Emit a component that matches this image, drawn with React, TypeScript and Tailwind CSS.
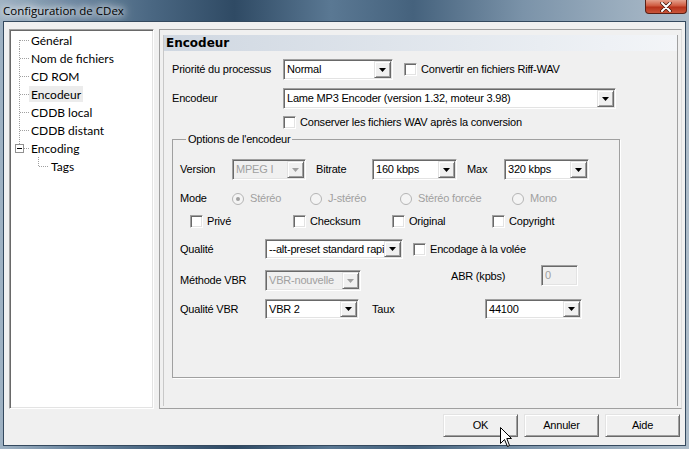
import React from 'react';

const sunken =
  'border border-t-[#a0a0a0] border-l-[#a0a0a0] border-b-white border-r-white shadow-[inset_1px_1px_0_#696969,inset_-1px_-1px_0_#e3e3e3]';
const raised =
  'border border-t-[#e3e3e3] border-l-[#e3e3e3] border-b-[#696969] border-r-[#696969] shadow-[inset_1px_1px_0_#ffffff,inset_-1px_-1px_0_#a0a0a0]';

const Arrow = ({ disabled }: { disabled?: boolean }) => (
  <div className={`flex w-[17px] shrink-0 items-center justify-center bg-[#f0f0f0] ${raised}`}>
    <svg width="7" height="4" viewBox="0 0 7 4">
      <polygon points="0,0 7,0 3.5,4" fill={disabled ? '#a0a0a0' : '#000'} />
    </svg>
  </div>
);

const Combo = ({ value, className, disabled }: { value: string; className: string; disabled?: boolean }) => (
  <div className={`flex shrink-0 p-px ${sunken} ${disabled ? 'bg-[#f0f0f0] text-[#a0a0a0]' : 'bg-white'} ${className}`}>
    <div className="flex min-w-0 flex-1 items-center overflow-hidden whitespace-nowrap pl-[2px]">{value}</div>
    <Arrow disabled={disabled} />
  </div>
);

const Check = ({ label, className = '' }: { label: string; className?: string }) => (
  <div className={`flex h-[13px] shrink-0 items-center ${className}`}>
    <div className={`h-[13px] w-[13px] shrink-0 bg-white ${sunken}`} />
    <span className="ml-[4px] whitespace-nowrap">{label}</span>
  </div>
);

const Radio = ({ label, checked, className = '' }: { label: string; checked?: boolean; className?: string }) => (
  <div className={`flex h-[13px] shrink-0 items-center text-[#a0a0a0] ${className}`}>
    <svg width="12" height="12" viewBox="0 0 12 12" className="shrink-0">
      <circle cx="6" cy="6" r="5.5" fill="#f4f4f4" stroke="#b4b4b4" />
      {checked && <circle cx="6" cy="6" r="2" fill="#a0a0a0" />}
    </svg>
    <span className="ml-[6px] whitespace-nowrap">{label}</span>
  </div>
);

const Btn = ({ label }: { label: string }) => (
  <div className={`flex h-[23px] w-[75px] items-center justify-center bg-[#f0f0f0] ${raised}`}>{label}</div>
);

type Node = { label: string; kind: 'first' | 'mid' | 'last' | 'child'; selected?: boolean };

const nodes: Node[] = [
  { label: 'Général', kind: 'first' },
  { label: 'Nom de fichiers', kind: 'mid' },
  { label: 'CD ROM', kind: 'mid' },
  { label: 'Encodeur', kind: 'mid', selected: true },
  { label: 'CDDB local', kind: 'mid' },
  { label: 'CDDB distant', kind: 'mid' },
  { label: 'Encoding', kind: 'last' },
  { label: 'Tags', kind: 'child' },
];

const Connector = ({ kind }: { kind: Node['kind'] }) => {
  if (kind === 'child')
    return (
      <svg width="39" height="18" className="shrink-0">
        <line x1="28.5" y1="0" x2="28.5" y2="9" stroke="#a0a0a0" strokeDasharray="1 1" />
        <line x1="29" y1="9.5" x2="38" y2="9.5" stroke="#a0a0a0" strokeDasharray="1 1" />
      </svg>
    );
  if (kind === 'last')
    return (
      <svg width="19" height="18" className="shrink-0">
        <line x1="9.5" y1="0" x2="9.5" y2="5" stroke="#a0a0a0" strokeDasharray="1 1" />
        <rect x="5.5" y="5.5" width="8" height="8" fill="#fff" stroke="#919191" />
        <line x1="7" y1="9.5" x2="12" y2="9.5" stroke="#000" />
        <line x1="14" y1="9.5" x2="19" y2="9.5" stroke="#a0a0a0" strokeDasharray="1 1" />
      </svg>
    );
  return (
    <svg width="19" height="18" className="shrink-0">
      <line x1="9.5" y1={kind === 'first' ? 9 : 0} x2="9.5" y2="18" stroke="#a0a0a0" strokeDasharray="1 1" />
      <line x1="10" y1="9.5" x2="19" y2="9.5" stroke="#a0a0a0" strokeDasharray="1 1" />
    </svg>
  );
};

export default function App() {
  return (
    <div className="relative flex h-[449px] w-[689px] flex-col overflow-hidden bg-[linear-gradient(90deg,#9fb2c3_0%,#6e89a2_10%,#4a6782_22%,#2f4a64_34%,#5a7893_48%,#45627d_60%,#7b93a9_76%,#9aadbe_90%,#aebdca_100%)] font-['Liberation_Sans',Arial,sans-serif] text-[11px] leading-[13px] tracking-[-0.2px] text-black">
      {/* title bar */}
      <div className="flex h-[21px] shrink-0 items-start justify-between">
        <span className="pl-[3px] pt-[3px] font-['Open_Sans',sans-serif] text-[11.5px] leading-[15px] tracking-normal [text-shadow:0_0_6px_#fff,0_0_10px_#fff,0_0_14px_#fff]">
          Configuration de CDex
        </span>
        <div className="mr-[2px] flex h-[14px] w-[42px] items-center justify-center rounded-b-[4px] border border-t-0 border-[#5a2015] bg-[linear-gradient(#e4a08c,#cf5a3f_45%,#b7321a_55%,#c9563a)]">
          <svg width="12" height="10" viewBox="0 0 12 10">
            <path d="M2 1 L10 9 M10 1 L2 9" stroke="#3a1208" strokeWidth="3.4" strokeLinecap="round" />
            <path d="M2 1 L10 9 M10 1 L2 9" stroke="#fff" strokeWidth="2" strokeLinecap="round" />
          </svg>
        </div>
      </div>

      {/* client area */}
      <div className="mx-[3px] mb-[3px] flex flex-1 flex-col border border-[#34495e] bg-[#f0f0f0] pt-[7px] pb-[8px]">
        <div className="flex h-[380px] gap-[5px] pl-[5px]">
          {/* tree */}
          <div className={`w-[145px] bg-white pt-px font-['Lato',sans-serif] text-[12px] tracking-normal ${sunken}`}>
            {nodes.map((n) => (
              <div key={n.label} className="flex h-[18px] items-center">
                <Connector kind={n.kind} />
                <span className={`flex h-[16px] items-center px-[2px] ${n.selected ? 'bg-[#ececec]' : ''}`}>{n.label}</span>
              </div>
            ))}
          </div>

          {/* property page */}
          <div className="flex w-[523px] flex-col border border-[#a0a0a0] border-r-[#dcdcdc] px-[3px] pt-[5px] pb-[2px]">
            <div className="flex flex-1 flex-col border-x border-l-[#c8c8c8] border-r-[#a0a0a0]">
              <div className="flex h-[16px] items-center bg-[linear-gradient(90deg,#cfd7e1,#e4e9ef_60%,#f3f5f8)] pl-[2px] font-['DejaVu_Sans',sans-serif] text-[12px] font-bold tracking-normal">
                Encodeur
              </div>

              <div className="flex flex-col pl-[8px]">
                <div className="mt-[8px] flex h-[21px] items-center">
                  <span className="w-[111px] shrink-0">Priorité du processus</span>
                  <Combo value="Normal" className="h-[21px] w-[110px]" />
                  <Check label="Convertir en fichiers Riff-WAV" className="ml-[11px]" />
                </div>
                <div className="mt-[8px] flex h-[21px] items-center">
                  <span className="w-[111px] shrink-0">Encodeur</span>
                  <Combo value="Lame MP3 Encoder (version 1.32, moteur 3.98)" className="h-[21px] w-[333px]" />
                </div>
                <Check label="Conserver les fichiers WAV après la conversion" className="ml-[111px] mt-[7px]" />

                <fieldset className="mt-[4px] h-[245px] w-[448px] border border-[#a0a0a0] pl-[7px] shadow-[1px_1px_0_#fff]">
                  <legend className="ml-[6px] px-[2px] leading-[13px]">Options de l'encodeur</legend>

                  <div className="mt-[13px] flex h-[21px] items-center">
                    <span className="w-[52px] shrink-0">Version</span>
                    <Combo value="MPEG I" disabled className="h-[21px] w-[74px]" />
                    <span className="ml-[10px] w-[56px] shrink-0">Bitrate</span>
                    <Combo value="160 kbps" className="h-[21px] w-[85px]" />
                    <span className="ml-[10px] w-[37px] shrink-0">Max</span>
                    <Combo value="320 kbps" className="h-[21px] w-[85px]" />
                  </div>

                  <div className="mt-[12px] flex h-[13px] items-center">
                    <span className="w-[52px] shrink-0">Mode</span>
                    <Radio label="Stéréo" checked className="w-[78px]" />
                    <Radio label="J-stéréo" className="w-[90px]" />
                    <Radio label="Stéréo forcée" className="w-[112px]" />
                    <Radio label="Mono" />
                  </div>

                  <div className="ml-[10px] mt-[10px] flex h-[13px] items-center">
                    <Check label="Privé" className="w-[103px]" />
                    <Check label="Checksum" className="w-[99px]" />
                    <Check label="Original" className="w-[100px]" />
                    <Check label="Copyright" />
                  </div>

                  <div className="mt-[11px] flex h-[20px] items-center">
                    <span className="w-[85px] shrink-0">Qualité</span>
                    <Combo value="--alt-preset standard rapide" className="h-[20px] w-[138px]" />
                    <Check label="Encodage à la volée" className="ml-[10px]" />
                  </div>

                  <div className="mt-[6px] flex items-start">
                    <span className="mt-[9px] w-[85px] shrink-0">Méthode VBR</span>
                    <Combo value="VBR-nouvelle" disabled className="mt-[5px] h-[21px] w-[96px]" />
                    <span className="ml-[90px] mt-[5px] w-[90px] shrink-0">ABR (kpbs)</span>
                    <div className={`flex h-[21px] w-[37px] items-center bg-[#f0f0f0] pl-[3px] text-[#a0a0a0] ${sunken}`}>0</div>
                  </div>

                  <div className="mt-[8px] flex h-[20px] items-center">
                    <span className="w-[85px] shrink-0">Qualité VBR</span>
                    <Combo value="VBR 2" className="h-[20px] w-[94px]" />
                    <span className="ml-[13px] w-[113px] shrink-0">Taux</span>
                    <Combo value="44100" className="h-[20px] w-[97px]" />
                  </div>
                </fieldset>
              </div>
            </div>
          </div>
        </div>

        <div className="mt-[5px] flex justify-end gap-[6px] pr-[5px]">
          <Btn label="OK" />
          <Btn label="Annuler" />
          <Btn label="Aide" />
        </div>
      </div>

      {/* mouse pointer over OK */}
      <svg width="13" height="21" viewBox="0 0 13 21" className="absolute left-[500px] top-[427px]">
        <path d="M0.5 0.5 L0.5 16.5 L4.5 12.5 L7.5 19.5 L9.5 18.5 L6.8 11.5 L11.5 11.5 Z" fill="#fff" stroke="#000" strokeLinejoin="round" />
      </svg>
    </div>
  );
}
